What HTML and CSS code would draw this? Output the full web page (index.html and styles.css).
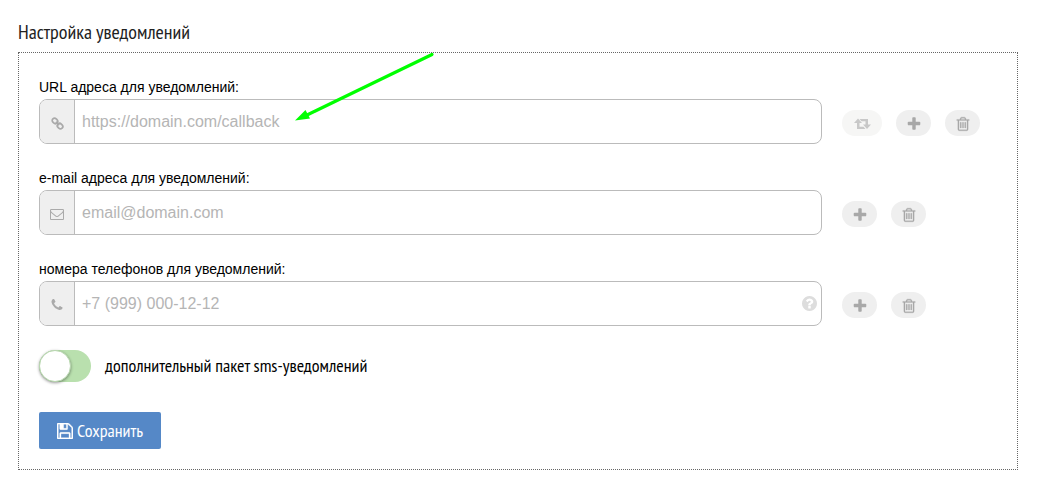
FILE: index.html
```html
<!DOCTYPE html>
<html lang="ru">
<head>
<meta charset="utf-8">
<title>Настройка уведомлений</title>
<link rel="stylesheet" href="styles.css">
</head>
<body>
<svg class="sprite" aria-hidden="true">
  <symbol id="plus" viewBox="0 0 1792 1792"><path d="M1600 736v192q0 40-28 68t-68 28h-416v416q0 40-28 68t-68 28h-192q-40 0-68-28t-28-68v-416h-416q-40 0-68-28t-28-68v-192q0-40 28-68t68-28h416v-416q0-40 28-68t68-28h192q40 0 68 28t28 68v416h416q40 0 68 28t28 68z"/></symbol>
  <symbol id="trash" viewBox="0 0 1792 1792"><path d="M704 736v576q0 14-9 23t-23 9h-64q-14 0-23-9t-9-23v-576q0-14 9-23t23-9h64q14 0 23 9t9 23zm256 0v576q0 14-9 23t-23 9h-64q-14 0-23-9t-9-23v-576q0-14 9-23t23-9h64q14 0 23 9t9 23zm256 0v576q0 14-9 23t-23 9h-64q-14 0-23-9t-9-23v-576q0-14 9-23t23-9h64q14 0 23 9t9 23zm128 724v-948h-896v948q0 22 7 40.5t14.500 27 10.500 8.500h832q3 0 10.500-8.500t14.500-27 7-40.500zm-672-1076h448l-48-117q-7-9-17-11h-317q-10 2-17 11zm928 32v64q0 14-9 23t-23 9h-96v948q0 83-47 143.500t-113 60.500h-832q-66 0-113-58.500t-47-141.500v-952h-96q-14 0-23-9t-9-23v-64q0-14 9-23t23-9h309l70-167q15-37 54-63t79-26h320q40 0 79 26t54 63l70 167h309q14 0 23 9t9 23z"/></symbol>
  <symbol id="mail" viewBox="0 0 1792 1792"><path d="M1664 1504v-768q-32 36-69 66-268 206-426 338-51 43-83 67t-86.5 48.5-102.5 24.5h-2q-48 0-102.5-24.5t-86.5-48.5-83-67q-158-132-426-338-37-30-69-66v768q0 13 9.5 22.5t22.5 9.5h1472q13 0 22.5-9.5t9.5-22.5zm0-1051v-24.5l-.5-13-3-12.5-5.5-9-9-7.500-14-2.500h-1472q-13 0-22.500 9.500t-9.500 22.500q0 168 147 284 193 152 401 317 6 5 35 29.500t46 37.500 44.500 31.500 50.500 27.500 43 9h2q20 0 43-9t50.500-27.500 44.500-31.500 46-37.500 35-29.500q208-165 401-317 54-43 100.500-115.500t46.500-131.500zm128-37v1088q0 66-47 113t-113 47h-1472q-66 0-113-47t-47-113v-1088q0-66 47-113t113-47h1472q66 0 113 47t47 113z"/></symbol>
  <symbol id="phone" viewBox="0 0 1792 1792"><path d="M1600 1240q0 27-10 70.5t-21 68.5q-21 50-122 106-94 51-186 51-27 0-52.5-3.5t-57.5-12.5-47.5-14.5-55.5-20.5-49-18q-98-35-175-83-128-79-264.5-215.5t-215.5-264.5q-48-77-83-175-3-9-18-49t-20.5-55.5-14.5-47.5-12.5-57.5-3.5-52.5q0-92 51-186 56-101 106-122 25-11 68.5-21t70.5-10q14 0 21 3 18 6 53 76 11 19 30 54t35 63.5 31 53.5q3 4 17.5 25t21.5 35.5 7 28.5q0 20-28.5 50t-62 55-62 53-28.5 46q0 9 5 22.5t8.5 20.5 14 24 11.5 19q76 137 174 235t235 174q2 1 19 11.5t24 14 20.5 8.5 22.5 5q18 0 46-28.5t53-62 55-62 50-28.5q14 0 28.5 7t35.5 21.5 25 17.5q25 15 53.5 31t63.5 35 54 30q70 35 76 53 3 7 3 21z"/></symbol>
  <symbol id="help" viewBox="128 128 1536 1536"><path d="M1024 1376v-192q0-14-9-23t-23-9h-192q-14 0-23 9t-9 23v192q0 14 9 23t23 9h192q14 0 23-9t9-23zm256-672q0-88-55.5-163t-138.5-116-170-41q-243 0-371 213-15 24 8 42l132 100q7 6 19 6 16 0 25-12 53-68 86-92 34-24 86-24 48 0 85.5 26t37.5 59q0 38-20 61t-68 45q-63 28-115.5 86.5t-52.5 125.5v36q0 14 9 23t23 9h192q14 0 23-9t9-23q0-19 21.5-49.5t54.5-49.5q32-18 49-28.5t46-35 44.5-48 28-60.5 12.5-81zm384 192q0 209-103 385.5t-279.5 279.5-385.5 103-385.5-103-279.5-279.5-103-385.5 103-385.5 279.5-279.5 385.5-103 385.5 103 279.5 279.5 103 385.5z"/></symbol>
  <symbol id="save" viewBox="128 128 1536 1536"><path d="M512 1536h768v-384h-768v384zm896 0h128v-896q0-14-10-38.500t-20-34.500l-281-281q-10-10-34-20t-39-10v416q0 40-28 68t-68 28h-576q-40 0-68-28t-28-68v-416h-128v1280h128v-416q0-40 28-68t68-28h832q40 0 68 28t28 68v416zm-384-928v-320q0-13-9.500-22.500t-22.500-9.500h-192q-13 0-22.500 9.500t-9.500 22.500v320q0 13 9.500 22.500t22.500 9.500h192q13 0 22.500-9.500t9.500-22.500zm640 32v928q0 40-28 68t-68 28h-1344q-40 0-68-28t-28-68v-1344q0-40 28-68t68-28h928q40 0 88 20t76 48l280 280q28 28 48 76t20 88z"/></symbol>
  <symbol id="link" viewBox="0 0 14 14"><g fill="none" stroke="currentColor" stroke-width="1.900" transform="rotate(45 7 7)"><rect x="0" y="4.500" width="6.200" height="5" rx="2.500"/><rect x="7.800" y="4.500" width="6.200" height="5" rx="2.500"/><path d="M4.500 7h5" stroke-width="1.700"/></g></symbol>
  <symbol id="repeat" viewBox="0 0 17 12"><path d="M4 .5L8 5H5.500v3.800H9.500L11.500 11H3V5H0zM5.500 1H14v5.500h3L13 11 9 6.500h2.500V3.200H7.500z"/></symbol>
</svg>

<main class="page">
  <h1 class="title">Настройка уведомлений</h1>
  <form class="panel">
    <div class="field">
      <label class="label" for="url">URL адреса для уведомлений:</label>
      <div class="row">
        <div class="box">
          <span class="addon"><svg class="icon icon-link"><use href="#link"/></svg></span>
          <input class="input" id="url" type="url" placeholder="https://domain.com/callback">
        </div>
        <div class="actions">
          <button class="action action-muted" type="button" aria-label="Повторить"><svg class="icon icon-repeat"><use href="#repeat"/></svg></button>
          <button class="action" type="button" aria-label="Добавить"><svg class="icon icon-plus"><use href="#plus"/></svg></button>
          <button class="action" type="button" aria-label="Удалить"><svg class="icon icon-trash"><use href="#trash"/></svg></button>
        </div>
      </div>
    </div>
    <div class="field">
      <label class="label" for="email">e-mail адреса для уведомлений:</label>
      <div class="row">
        <div class="box">
          <span class="addon"><svg class="icon"><use href="#mail"/></svg></span>
          <input class="input" id="email" type="email" placeholder="email@domain.com">
        </div>
        <div class="actions">
          <button class="action" type="button" aria-label="Добавить"><svg class="icon icon-plus"><use href="#plus"/></svg></button>
          <button class="action" type="button" aria-label="Удалить"><svg class="icon icon-trash"><use href="#trash"/></svg></button>
        </div>
      </div>
    </div>
    <div class="field">
      <label class="label" for="phone-number">номера телефонов для уведомлений:</label>
      <div class="row">
        <div class="box">
          <span class="addon"><svg class="icon"><use href="#phone"/></svg></span>
          <input class="input" id="phone-number" type="tel" placeholder="+7 (999) 000-12-12">
          <svg class="icon icon-help"><use href="#help"/></svg>
        </div>
        <div class="actions">
          <button class="action" type="button" aria-label="Добавить"><svg class="icon icon-plus"><use href="#plus"/></svg></button>
          <button class="action" type="button" aria-label="Удалить"><svg class="icon icon-trash"><use href="#trash"/></svg></button>
        </div>
      </div>
    </div>
    <div class="option">
      <input class="toggle" id="sms" type="checkbox">
      <label class="option-label" for="sms">дополнительный пакет sms-уведомлений</label>
    </div>
    <button class="save" type="submit"><svg class="icon icon-save"><use href="#save"/></svg>Сохранить</button>
  </form>
  <svg class="arrow" viewBox="0 0 140 70" aria-hidden="true"><path d="M137 4.500L11 65.500" stroke="#0f0" stroke-width="3.200" stroke-linecap="round"/><path d="M0 70.500L10.500 60 15 68.500z" fill="#0f0"/></svg>
</main>
</body>
</html>
```
FILE: styles.css
```css
*,
*::before {
  box-sizing: border-box;
}

body {
  margin: 0;
  background: #fff;
  color: #000;
  font-family: "Liberation Sans", Arial, sans-serif;
}

.sprite {
  position: absolute;
  width: 0;
  height: 0;
}

.page {
  position: relative;
  padding: 20px 43px 14px 18px;
}

.title,
.option-label,
.save {
  font-family: "PT Sans Narrow", "Liberation Sans Narrow", "Open Sans", sans-serif;
  font-weight: 400;
}

.title {
  margin: 0 0 8px;
  color: #222;
  font-size: 20px;
  line-height: 24px;
}

.panel {
  padding: 24px 20px 20px;
  border: 1px dotted #666;
}

.field {
  margin-bottom: 24px;
}

.label {
  display: block;
  height: 22px;
  font-size: 14px;
  line-height: 20px;
}

.row {
  display: grid;
  grid-template-columns: 1fr 155px;
  column-gap: 20px;
}

.box {
  display: flex;
  align-items: center;
  height: 45px;
  overflow: hidden;
  border: 1px solid #bbb;
  border-radius: 8px;
}

.addon {
  display: flex;
  flex: none;
  align-items: center;
  justify-content: center;
  width: 35px;
  height: 100%;
  padding-top: 3px;
  border-right: 1px solid #bbb;
  background: #efefef;
  color: #aaa;
}

.input {
  flex: 1;
  min-width: 0;
  height: 100%;
  padding: 0 7px;
  border: 0;
  background: transparent;
  font-family: inherit;
  font-size: 16px;
}

.input::placeholder {
  color: #b5b5b5;
}

.icon {
  display: block;
  flex: none;
  width: 14px;
  height: 14px;
  fill: currentColor;
}

.icon-link {
  width: 13px;
  height: 13px;
}

.icon-plus,
.icon-trash,
.icon-save {
  width: 16px;
  height: 16px;
}

.icon-trash,
.icon-save {
  stroke: currentColor;
  stroke-width: 30px;
}

.icon-repeat {
  width: 17px;
  height: 12px;
}

.icon-help {
  width: 15px;
  height: 15px;
  margin-right: 4px;
  color: #ddd;
}

.actions {
  display: flex;
  gap: 14px;
  padding-top: 11px;
}

.action {
  display: flex;
  align-items: center;
  justify-content: center;
  width: 35px;
  height: 26px;
  padding: 2px 0 0;
  border: 0;
  border-radius: 13px;
  background: #efefef;
  color: #a8a8a8;
}

.action-muted {
  width: 40px;
  background: #f6f6f5;
  color: #c8c8c8;
}

.option {
  display: flex;
  align-items: center;
  gap: 14px;
  margin-bottom: 30px;
}

.toggle {
  width: 52px;
  height: 32px;
  margin: 0;
  appearance: none;
  border-radius: 16px;
  background: #b9e0ae;
}

.toggle::before {
  display: block;
  width: 32px;
  height: 32px;
  border: 1px solid #b9d8b0;
  border-radius: 50%;
  background: #fff;
  box-shadow: 0 1px 3px rgba(0, 0, 0, 0.4);
  content: "";
}

.toggle:checked::before {
  margin-left: auto;
}

.option-label {
  font-size: 18px;
  line-height: 24px;
}

.save {
  display: flex;
  align-items: center;
  gap: 4px;
  height: 37px;
  padding: 0 18px;
  border: 0;
  border-radius: 2px;
  background: #5588c7;
  color: #fff;
  font-size: 18px;
}

.arrow {
  position: absolute;
  top: 50px;
  left: 295px;
  width: 140px;
  height: 70px;
  overflow: visible;
  pointer-events: none;
}
```
